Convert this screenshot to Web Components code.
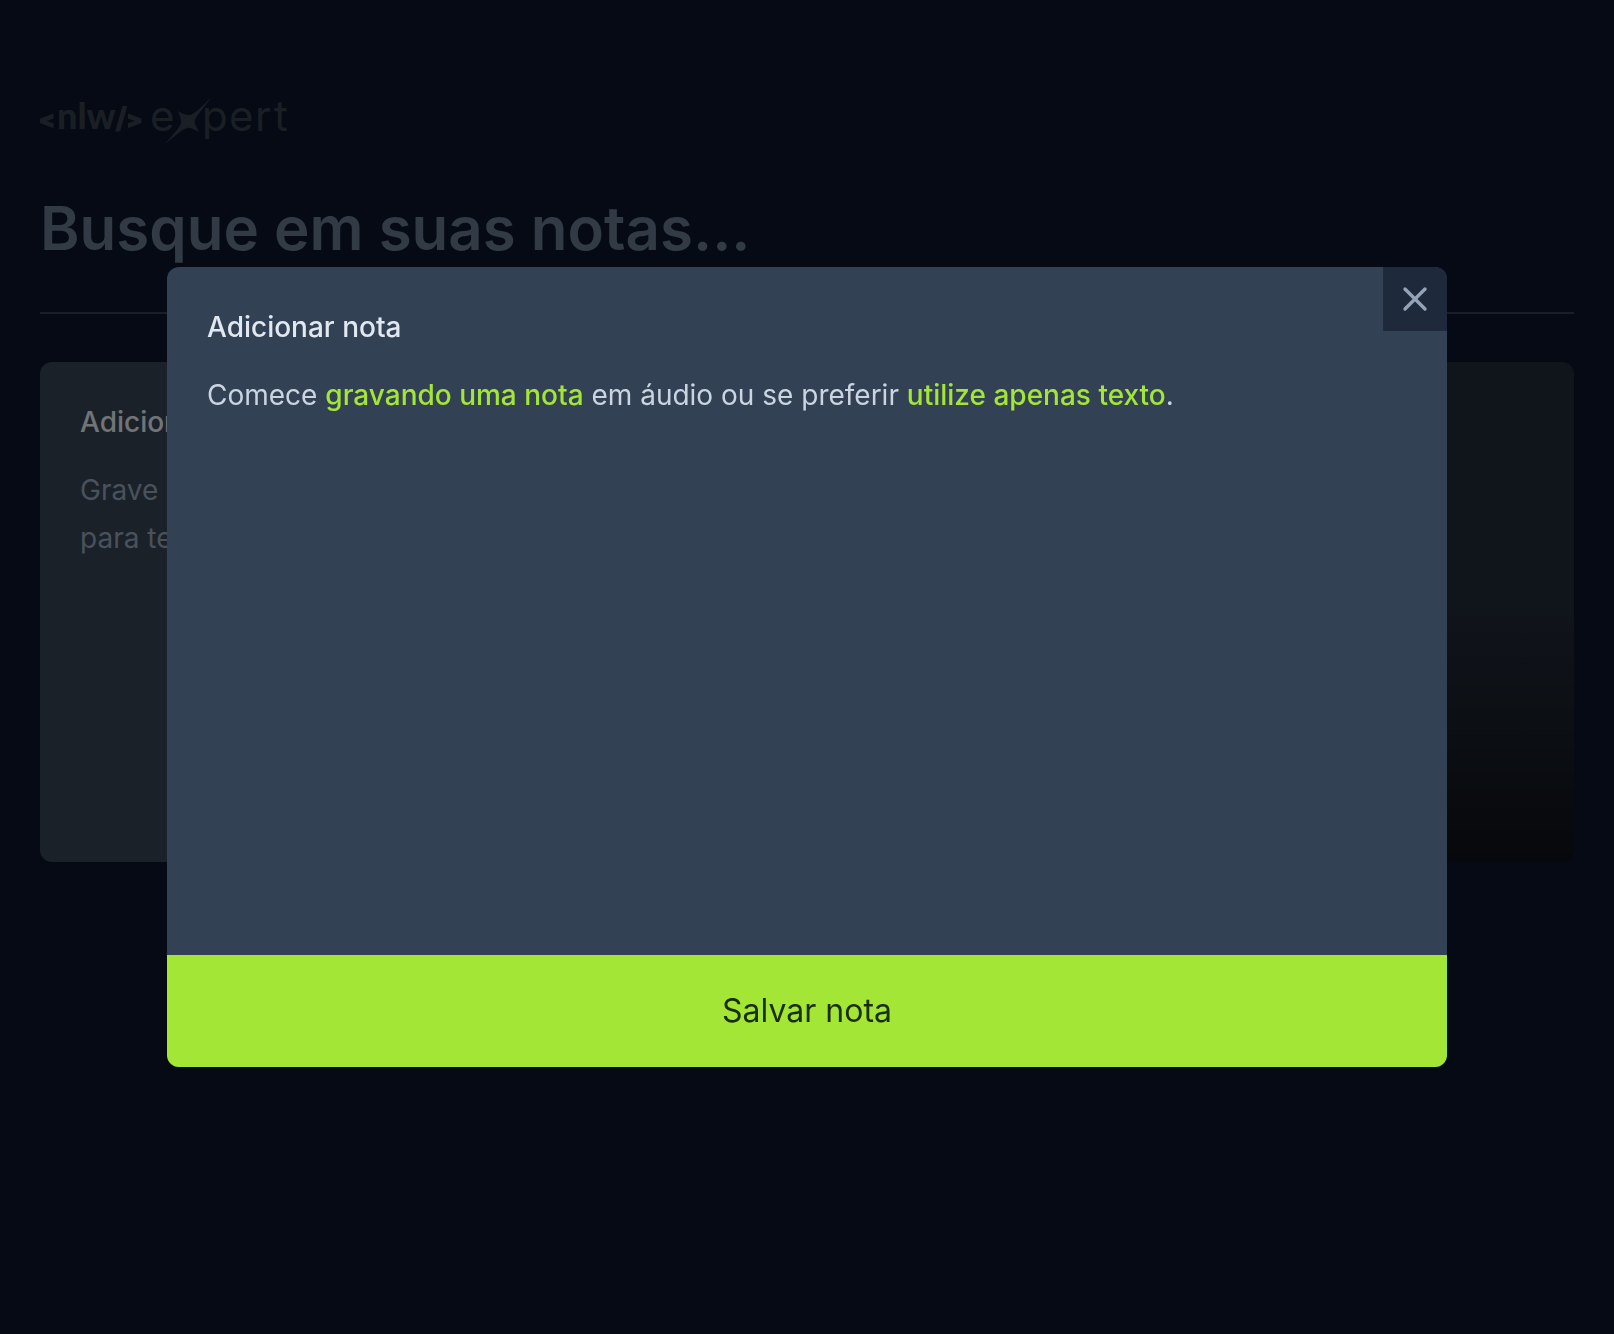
<!DOCTYPE html>
<html lang="pt-BR">
<head>
<meta charset="utf-8">
<meta name="viewport" content="width=device-width, initial-scale=1">
<title>NLW Expert Notes</title>
<style>
  body {
    margin: 0;
    min-height: 100vh;
    background: #0b1529;
    color: #f8fafc;
    font-family: Inter, "Liberation Sans", sans-serif;
    font-size: 28px;
    line-height: 40px;
    -webkit-font-smoothing: antialiased;
  }
</style>
</head>
<body>
<notes-app></notes-app>

<script>
const define = (name, html, setup) => {
  const template = document.createElement('template');
  template.innerHTML = '<style>*{box-sizing:border-box}</style>' + html;
  customElements.define(name, class extends HTMLElement {
    constructor() {
      super();
      this.attachShadow({ mode: 'open' }).append(template.content.cloneNode(true));
      if (setup) setup(this, this.shadowRoot);
    }
  });
};

define('nlw-logo', `
  <style>
    :host { display: block; height: 48px; color: #353e4b; }
    svg { display: block; overflow: visible; fill: currentColor; }
    .tag { font-family: Lato, sans-serif; font-size: 36px; font-weight: 900; }
    .word { font-family: Inter, sans-serif; font-size: 42px; font-weight: 400; }
  </style>
  <svg width="252" height="48" viewBox="0 0 252 48" role="img" aria-label="nlw expert">
    <path d="M13.500 17.500 0 22.800V27L13.500 32.300V27.200L6.500 24.900L13.500 22.600Z"/>
    <path d="M88 17.500 101.500 22.800V27L88 32.300V27.200L95 24.900L88 22.600Z"/>
    <path d="M82.500 10H87.300L80 35.500H75.200Z"/>
    <text class="tag" x="17" y="33">nlw</text>
    <text class="word" x="110" y="35">e</text>
    <path d="M171 1C162 13 156 19 155 23C154 26 156 29 159 35C153 32 150 30 147 31C142 32 135 39 125 47C134 36 141 30 141 25C141 22 140 19 138 14C143 17 146 18 149 18C154 18 160 11 171 1Z" transform="translate(0 1)"/>
    <text class="word" x="162 189 215 234" y="35">pert</text>
  </svg>
`);

define('search-form', `
  <style>
    :host { display: block; }
    input {
      display: block; width: 100%; height: 72px; padding: 0; border: 0; outline: 0;
      background: transparent; color: #f8fafc;
      font: 600 60px/72px Inter, "Liberation Sans", sans-serif;
    }
    input::placeholder { color: #64748b; opacity: 1; }
  </style>
  <form role="search">
    <input type="text" aria-label="Busque em suas notas" placeholder="Busque em suas notas...">
  </form>
`);

define('note-card', `
  <style>
    :host { display: block; --card: #212936; }
    :host([variant="new"]) { --card: #354251; }
    button {
      position: relative; overflow: hidden;
      display: flex; flex-direction: column; gap: 24px;
      width: 100%; height: 100%; padding: 40px;
      border: 0; border-radius: 12px; background: var(--card);
      color: #94a3b8; font: inherit; text-align: left;
    }
    .title { color: #e2e8f0; font-weight: 500; }
    .text { line-height: 48px; }
    .fade {
      position: absolute; inset: 50% 0 0 0;
      background: linear-gradient(to top, rgb(0 0 0 / .6), rgb(0 0 0 / 0));
    }
    :host([variant="new"]) .fade { display: none; }
  </style>
  <button type="button">
    <span class="title"><slot name="title"></slot></span>
    <span class="text"><slot></slot></span>
    <span class="fade"></span>
  </button>
`);

define('new-note-dialog', `
  <style>
    :host {
      position: fixed; inset: 0;
      display: flex; align-items: center; justify-content: center;
      background: rgb(0 0 0 / .5);
    }
    section {
      position: relative; overflow: hidden;
      display: flex; flex-direction: column;
      width: 100%; max-width: 1280px; height: 60vh;
      border-radius: 12px; background: #334155;
    }
    .close {
      position: absolute; top: 0; right: 0;
      display: block; padding: 12px; border: 0;
      background: #1e293b; color: #94a3b8;
    }
    .close svg { display: block; }
    .body { flex: 1; display: flex; flex-direction: column; gap: 24px; padding: 40px; }
    h2 { margin: 0; color: #e2e8f0; font-size: 28px; font-weight: 500; line-height: 40px; }
    p { margin: 0; color: #cbd5e1; line-height: 48px; }
    .link {
      display: inline; padding: 0; border: 0; background: none;
      color: #a3e635; font: inherit; font-weight: 500;
    }
    .save {
      padding: 32px; border: 0; background: #a3e635; color: #1a2e05;
      font: 400 32px/48px Inter, "Liberation Sans", sans-serif;
    }
  </style>
  <section role="dialog" aria-modal="true" aria-labelledby="heading">
    <button class="close" type="button" aria-label="Fechar">
      <svg width="40" height="40" viewBox="0 0 24 24" fill="none" stroke="currentColor" stroke-width="2" stroke-linecap="round" stroke-linejoin="round"><path d="M18 6 6 18"/><path d="m6 6 12 12"/></svg>
    </button>
    <div class="body">
      <h2 id="heading">Adicionar nota</h2>
      <p>Comece <button class="link" type="button">gravando uma nota</button> em áudio ou se preferir <button class="link" type="button">utilize apenas texto</button>.</p>
    </div>
    <button class="save" type="button">Salvar nota</button>
  </section>
`, (host, root) => {
  root.querySelector('.close').addEventListener('click', () => host.remove());
});

define('notes-app', `
  <style>
    :host { display: block; padding: 96px 40px; }
    main { display: flex; flex-direction: column; gap: 48px; }
    hr { width: 100%; height: 2px; margin: 0; border: 0; background: #343c4a; }
    .grid { display: grid; grid-template-columns: 1fr 1fr; grid-auto-rows: 500px; gap: 48px; }
  </style>
  <main>
    <nlw-logo></nlw-logo>
    <search-form></search-form>
    <hr>
    <div class="grid">
      <note-card variant="new">
        <span slot="title">Adicionar nota</span>
        Grave uma nota em áudio que será convertida para texto automaticamente.
      </note-card>
      <note-card></note-card>
    </div>
  </main>
  <new-note-dialog></new-note-dialog>
`);
</script>
</body>
</html>
